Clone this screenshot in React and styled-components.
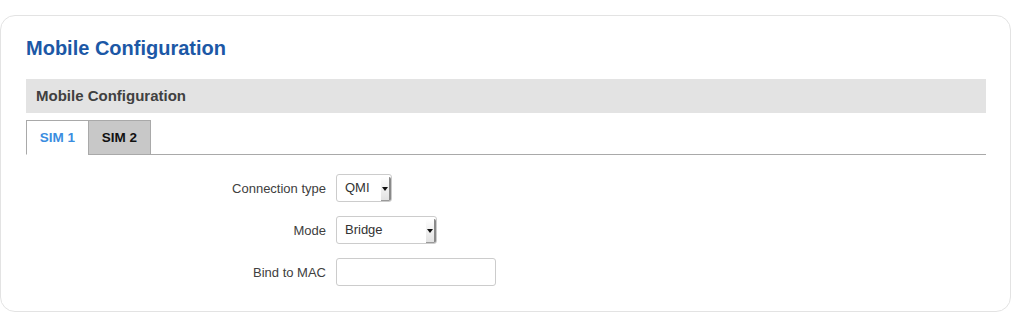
import React from 'react';
import styled, { createGlobalStyle } from 'styled-components';

const Global = createGlobalStyle`
  body {
    margin: 0;
    background: #fff;
    font-family: "Liberation Sans", Arial, sans-serif;
  }
`

const Page = styled.div`
  padding-top: 15px;
`

const Card = styled.div`
  width: 1011px;
  height: 297px;
  box-sizing: border-box;
  border: 1px solid #e3e3e3;
  border-radius: 15px;
  padding: 20px 24px 0 25px;
`

const Title = styled.h2`
  margin: 0;
  font-size: 20px;
  line-height: 24px;
  font-weight: bold;
  color: #1c58a6;
`

const SectionBar = styled.div`
  margin-top: 19px;
  height: 34px;
  line-height: 34px;
  background: #e3e3e3;
  padding-left: 10px;
  font-size: 15px;
  font-weight: bold;
  color: #404040;
`

const Tabs = styled.div`
  margin-top: 7px;
  display: flex;
  border-bottom: 1px solid #a9a9a9;
  height: 34px;
`

const Tab = styled.div`
  box-sizing: border-box;
  width: 63px;
  height: 35px;
  text-align: center;
  border: 1px solid #a9a9a9;
  border-bottom: ${p => (p.active ? '1px solid #fff' : '1px solid #a9a9a9')};
  margin-left: ${p => (p.active ? '0' : '-1px')};
  background: ${p => (p.active ? '#fff' : '#c8c8c8')};
  color: ${p => (p.active ? '#3a8de0' : '#111')};
  font-size: 13.5px;
  font-weight: bold;
  line-height: 33px;
`

const Form = styled.div`
  margin-top: 19px;
  display: grid;
  grid-template-columns: 300px auto;
  column-gap: 10px;
  row-gap: 14px;
  align-items: center;
  justify-items: start;
`

const Label = styled.div`
  justify-self: end;
  font-size: 13px;
  color: #404040;
`

const Select = styled.div`
  position: relative;
  box-sizing: border-box;
  width: ${p => p.width}px;
  height: 28px;
  border: 1px solid #cccccc;
  border-radius: 3px;
  padding-left: 8px;
  font-size: 13px;
  line-height: 26px;
  color: #333;
  background: #fff;
`

const Arrow = styled.span`
  position: absolute;
  right: 0;
  top: 2px;
  bottom: 0;
  width: 8px;
  background: linear-gradient(#ffffff, #e2e2e2);
  border-right: 2px solid #8a8a8a;
  border-bottom: 1px solid #9a9a9a;
  border-radius: 0 2px 2px 0;
  &::after {
    content: '';
    position: absolute;
    left: 1px;
    top: 10px;
    border-left: 3px solid transparent;
    border-right: 3px solid transparent;
    border-top: 4px solid #111;
  }
`

const Input = styled.input`
  box-sizing: border-box;
  width: 160px;
  height: 28px;
  border: 1px solid #cccccc;
  border-radius: 3px;
  font-family: inherit;
  font-size: 13px;
  padding: 0 8px;
  outline: none;
`

const App = () => {
  return (
    <Page>
      <Global />
      <Card>
        <Title>Mobile Configuration</Title>
        <SectionBar>Mobile Configuration</SectionBar>
        <Tabs>
          <Tab active>SIM 1</Tab>
          <Tab>SIM 2</Tab>
        </Tabs>
        <Form>
          <Label>Connection type</Label>
          <Select width={56}>QMI<Arrow /></Select>
          <Label>Mode</Label>
          <Select width={101}>Bridge<Arrow /></Select>
          <Label>Bind to MAC</Label>
          <Input type="text" />
        </Form>
      </Card>
    </Page>
  );
}

export default App;
